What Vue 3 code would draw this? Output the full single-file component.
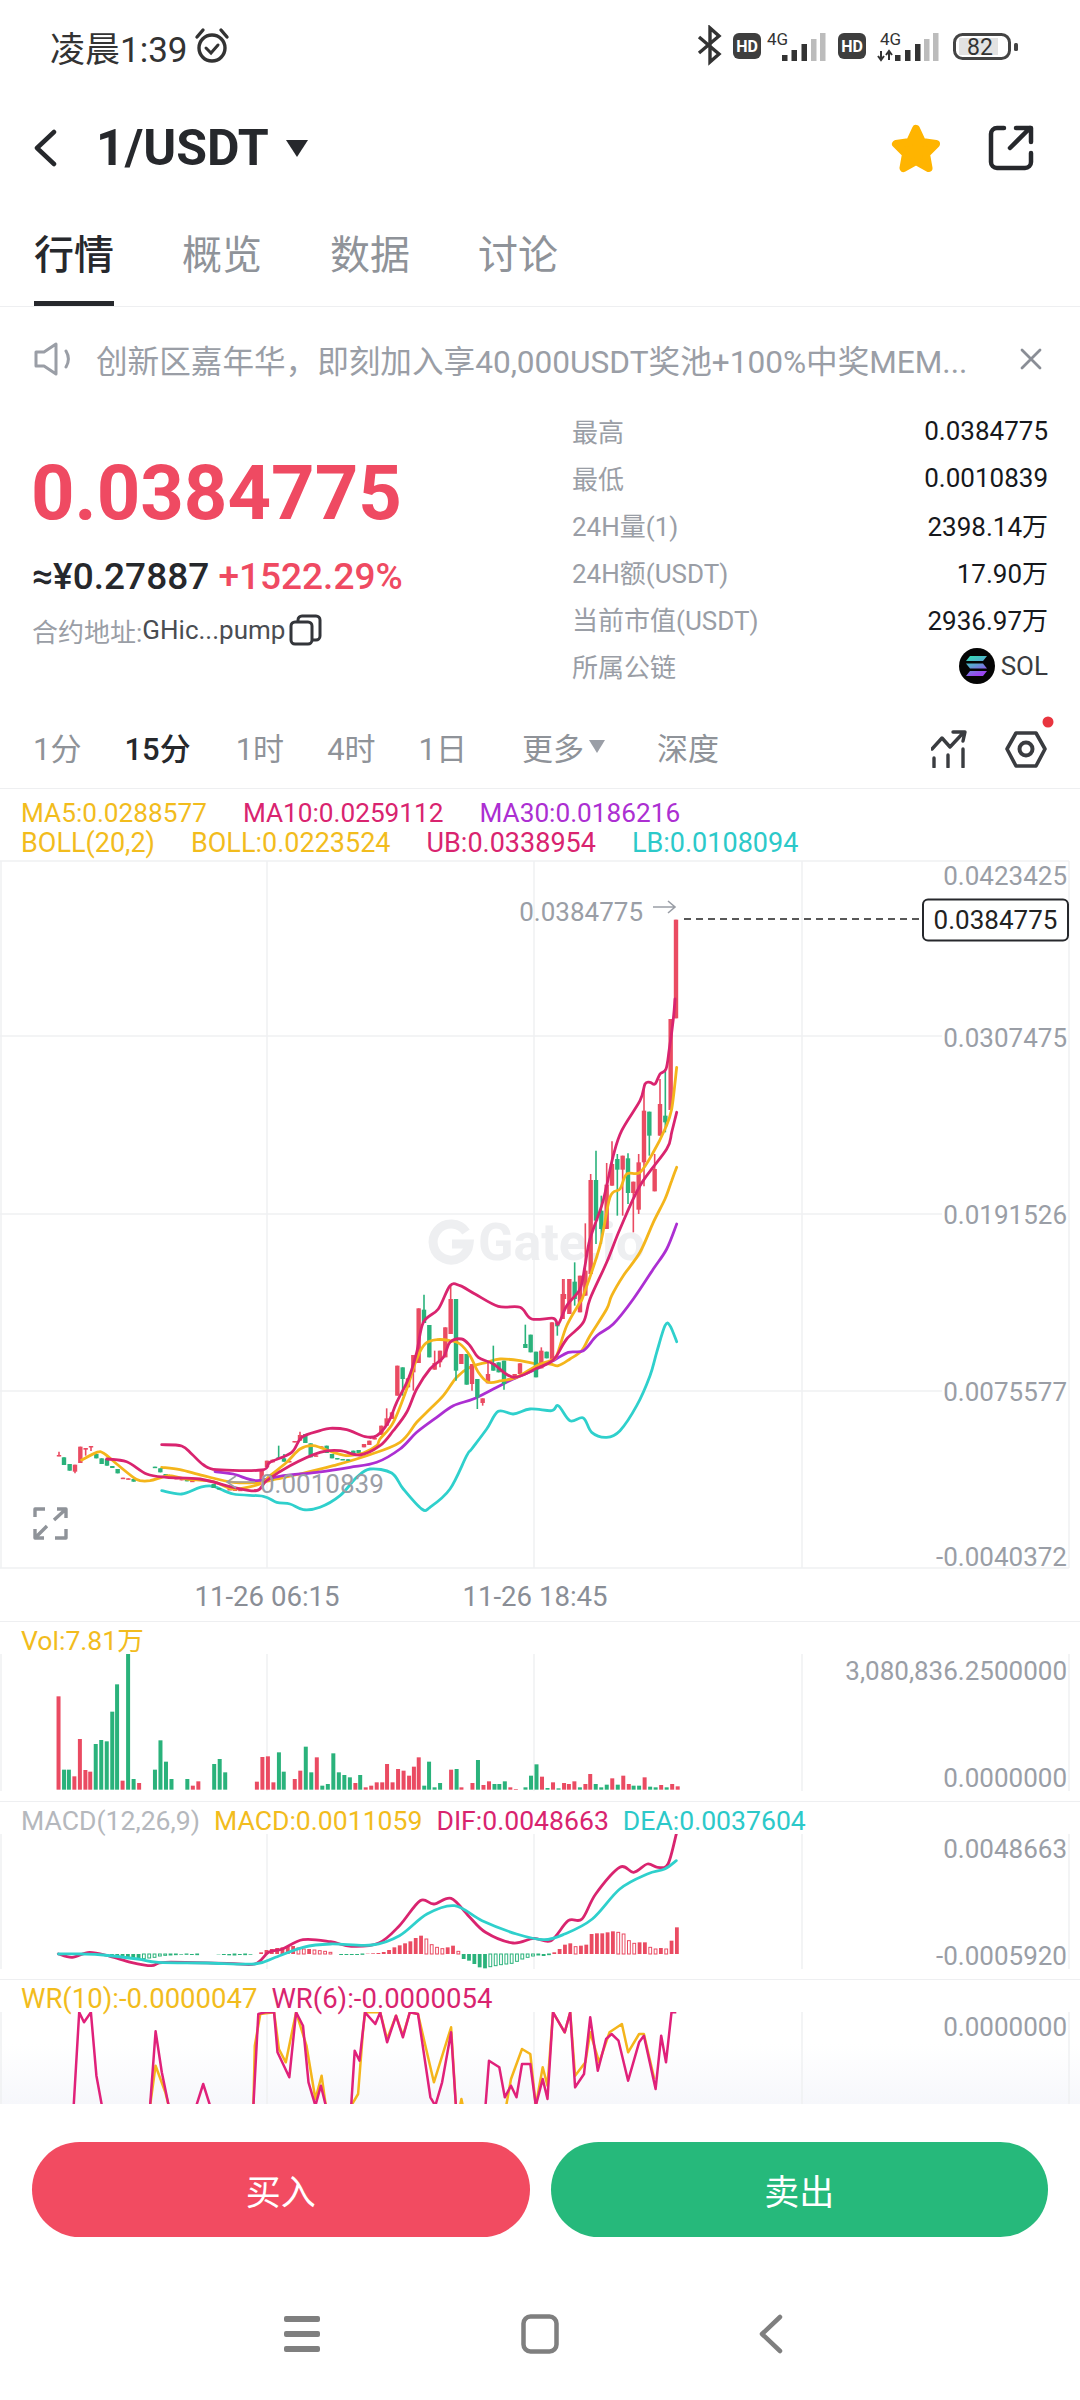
<script setup>
const RED = '#ea4b62';
const GREEN = '#2ab27b';

// Points are read off crops of the chart, so each list keeps its crop's scale.
const z4 = (pts) => pts.map(([x, y]) => [x / 3, 1300 + y / 3]);
const z7 = (pts) => pts.map(([x, y]) => [380 + x / 3, 1250 + y / 3]);
const z9 = (pts) => pts.map(([x, y]) => [540 + x / 3, 1100 + y / 3]);

// Catmull-Rom through the points, the indicators are curves on the real chart.
function smooth(pts) {
  let d = `M${pts[0][0].toFixed(1)} ${pts[0][1].toFixed(1)}`;
  for (let i = 0; i < pts.length - 1; i++) {
    const p0 = pts[i - 1] || pts[i];
    const p1 = pts[i];
    const p2 = pts[i + 1];
    const p3 = pts[i + 2] || p2;
    const c1x = p1[0] + (p2[0] - p0[0]) / 6;
    const c1y = p1[1] + (p2[1] - p0[1]) / 6;
    const c2x = p2[0] - (p3[0] - p1[0]) / 6;
    const c2y = p2[1] - (p3[1] - p1[1]) / 6;
    d += `C${c1x.toFixed(1)} ${c1y.toFixed(1)} ${c2x.toFixed(1)} ${c2y.toFixed(1)} ${p2[0].toFixed(1)} ${p2[1].toFixed(1)}`;
  }
  return d;
}
const toPoints = (pts) => pts.map(([x, y]) => `${x.toFixed(1)},${y.toFixed(1)}`).join(' ');

const mainLines = [
  {
    color: '#f4b51b',
    d: smooth([
      ...z4([[485, 505], [540, 512], [610, 530], [700, 550], [780, 550], [830, 540], [900, 525], [1000, 500], [1100, 470]]),
      ...z7([[60, 580], [110, 520], [150, 480], [190, 440], [230, 385], [270, 355], [320, 340], [360, 330], [420, 335], [470, 345], [510, 345], [535, 350], [570, 330], [605, 305], [630, 260], [680, 180]]),
      ...z9([[215, 590], [250, 530], [300, 460], [340, 370], [375, 300], [395, 245], [410, 205]]),
    ]),
  },
  {
    color: '#ac2fd2',
    d: smooth([
      ...z4([[645, 518], [700, 525], [770, 545], [850, 530], [950, 520], [1050, 505], [1130, 490]]),
      ...z7([[60, 600], [110, 550], [170, 505], [220, 470], [280, 450], [340, 420], [400, 390], [470, 360], [520, 335], [565, 310], [610, 305], [650, 260], [700, 225]]),
      ...z9([[280, 600], [340, 510], [380, 450], [410, 375]]),
    ]),
  },
  {
    color: '#2fd0cc',
    d: smooth([
      ...z4([[485, 575], [545, 585], [600, 565], [640, 562], [700, 585], [790, 592], [830, 610], [870, 615], [910, 632], [960, 625], [1020, 590], [1070, 535], [1110, 510], [1175, 522], [1210, 570], [1265, 630], [1290, 625], [1350, 570], [1400, 470]]),
      ...z7([[275, 600], [320, 540], [355, 487], [400, 495], [450, 480], [515, 485], [535, 470], [570, 515], [610, 507], [635, 550], [680, 565], [720, 545], [770, 470], [810, 380], [830, 310], [855, 230], [870, 230], [890, 278]]),
    ]),
  },
];

const overLines = [
  {
    color: '#f4b51b',
    d: smooth([
      ...z4([[245, 483], [290, 460], [310, 462], [350, 495], [400, 535], [420, 545], [450, 545], [485, 535], [510, 530], [560, 540], [640, 548], [700, 570], [780, 555], [810, 530], [860, 490], [900, 450], [940, 440], [1000, 460], [1045, 470], [1090, 462], [1130, 440]]),
      ...z7([[0, 570], [40, 520], [80, 420], [110, 330], [135, 285], [170, 272], [210, 275], [240, 285], [270, 320], [295, 370], [325, 400], [365, 395], [410, 385], [470, 350], [510, 335], [530, 320], [560, 230], [600, 160]]),
      ...z9([[130, 590], [180, 440], [210, 295], [240, 270], [260, 225], [300, 220], [340, 160], [375, 90], [395, 30], [410, -95]]),
    ]),
  },
  {
    color: '#d9246f',
    d: smooth([
      ...z4([[320, 480], [380, 488], [440, 525], [500, 535], [600, 540], [700, 565], [770, 575], [800, 545], [870, 500], [960, 460], [1020, 455], [1080, 468]]),
      ...z7([[0, 590], [40, 545], [80, 490], [110, 420], [150, 360], [190, 325], [210, 280], [245, 270], [270, 290], [295, 325], [340, 345], [400, 385], [470, 358], [510, 340], [530, 320], [560, 270], [610, 220]]),
      ...z9([[150, 600], [200, 490], [240, 390], [300, 260], [380, 150], [395, 100], [410, 40]]),
    ]),
  },
  {
    color: '#d9246f',
    d: smooth([
      ...z4([[485, 437], [545, 441], [575, 465], [610, 497], [650, 512], [785, 513], [810, 490], [875, 460], [905, 415], [960, 395], [990, 388], [1040, 392], [1095, 413], [1130, 410]]),
      ...z7([[25, 520], [50, 460], [85, 390], [110, 310], [130, 220], [175, 180], [210, 110], [240, 110], [285, 135], [355, 172], [420, 175], [455, 210], [520, 208], [535, 225], [560, 170], [600, 120]]),
      ...z9([[135, 500], [150, 420], [185, 320], [200, 260], [220, 170], [245, 95], [300, 5], [315, -45], [330, -50], [345, -45], [360, -75], [378, -90], [388, -150], [400, -240], [405, -300]]),
    ]),
  },
];

// [colour, x, bodyTop, bodyBottom, wickTop, wickBottom]
const leftCandles = [
  ['r', 177, 468, 472, 458, 472], ['g', 192, 475, 498], ['g', 209, 495, 515], ['r', 225, 497, 518, 497, 523], ['r', 241, 443, 492],
  ['r', 257, 447, 452, 447, 470], ['r', 273, 441, 444, 441, 456], ['g', 289, 465, 478], ['g', 305, 478, 495], ['g', 321, 480, 500],
  ['g', 337, 501, 507], ['g', 353, 510, 523], ['r', 369, 536, 539], ['r', 385, 538, 541], ['g', 401, 540, 548],
  ['g', 465, 503, 506], ['g', 481, 508, 520], ['g', 497, 525, 530], ['g', 513, 530, 538], ['r', 530, 537, 540], ['r', 545, 537, 544],
  ['g', 561, 535, 547], ['r', 577, 545, 549], ['r', 593, 540, 544], ['r', 609, 540, 544], ['g', 641, 555, 567], ['g', 657, 567, 571],
  ['r', 689, 570, 573], ['r', 705, 570, 576], ['r', 721, 572, 575], ['r', 769, 570, 574], ['r', 785, 510, 540], ['r', 801, 485, 505],
  ['r', 818, 482, 490], ['g', 836, 475, 480, 440, 480], ['g', 852, 478, 488, 465, 488], ['r', 868, 486, 490], ['r', 884, 426, 430],
  ['r', 900, 408, 425, 398, 425], ['g', 916, 405, 432], ['g', 932, 433, 475], ['r', 948, 469, 472], ['r', 964, 442, 445],
  ['g', 980, 440, 462], ['g', 996, 465, 478], ['g', 1012, 477, 481], ['g', 1028, 480, 483], ['g', 1044, 481, 484], ['g', 1060, 455, 465],
  ['g', 1076, 453, 462], ['r', 1092, 435, 445], ['r', 1108, 425, 438], ['r', 1124, 417, 421],
];
const midCandles = [
  ['r', 4, 530, 558], ['r', 20, 508, 530, 478, 530], ['r', 36, 490, 510], ['r', 52, 350, 440], ['g', 68, 355, 390, 355, 440],
  ['r', 84, 388, 415], ['r', 100, 318, 370, 318, 425], ['r', 116, 178, 342], ['g', 132, 182, 222, 137, 222], ['g', 148, 228, 325],
  ['r', 164, 342, 362, 305, 362], ['r', 180, 305, 340, 305, 355], ['r', 196, 235, 325], ['r', 212, 150, 255, 110, 255],
  ['g', 228, 150, 365, 150, 395], ['r', 244, 315, 345], ['g', 260, 315, 407], ['r', 276, 345, 405, 345, 425],
  ['g', 292, 390, 445, 390, 480], ['r', 308, 448, 462, 448, 470], ['r', 324, 375, 403, 335, 403], ['g', 340, 342, 365, 290, 365],
  ['g', 356, 340, 370], ['g', 372, 335, 405, 335, 422], ['r', 388, 388, 395], ['r', 404, 375, 383], ['r', 420, 343, 375],
  ['g', 436, 285, 297, 227, 297], ['g', 452, 257, 310], ['g', 468, 308, 385], ['r', 484, 305, 358, 295, 358], ['g', 500, 308, 328],
  ['r', 516, 220, 330], ['g', 532, 222, 232, 222, 260], ['r', 548, 135, 210, 90, 210],
];
const rightCandles = [
  ['r', 72, 585, 600, 540, 600], ['r', 88, 540, 645], ['g', 104, 548, 600, 490, 620], ['r', 120, 530, 640], ['r', 136, 515, 590, 373, 590],
  ['r', 152, 243, 525, 225, 525], ['g', 168, 243, 365, 155, 435], ['g', 184, 335, 390, 290, 435], ['r', 200, 257, 390, 192, 390],
  ['r', 216, 195, 260, 127, 260], ['g', 232, 180, 212, 165, 350], ['r', 248, 170, 212, 170, 350], ['g', 264, 178, 282, 163, 315],
  ['r', 280, 248, 282, 248, 400], ['r', 296, 190, 332, 165, 345], ['r', 312, 35, 190, -40, 262], ['g', 328, 38, 110, 38, 170],
  ['r', 344, 210, 277, 165, 277], ['r', 360, 15, 110, -60, 110], ['g', 376, 50, 70, -90, 100], ['r', 392, -240, 33], ['r', 408, -538, -242],
];
const candle = (ox, oy) => ([c, x, t, b, wt, wb]) => ({
  x: ox + x / 3,
  top: oy + t / 3,
  height: Math.max((b - t) / 3, 1.5),
  wickTop: oy + (wt ?? t) / 3,
  wickBottom: oy + (wb ?? b) / 3,
  color: c === 'r' ? RED : GREEN,
});
const candles = [
  ...leftCandles.map(candle(0, 1300)),
  ...midCandles.map(candle(380, 1250)),
  ...rightCandles.map(candle(540, 1100)),
];

// Volume bars: colour, then x and top as read on the stretched crop
const VOL_BASE = 512;
const volRaw = 'r85:232 g93:452 g100:452 r108:472 r116:360 r124:453 r131:458 g139:375 g147:363 g155:367 g163:278 g170:196 r178:485 g186:105 g194:480 r202:492 g225:452 g233:364 g241:428 g249:480 g272:480 r280:500 r288:487 g311:435 g319:420 g327:460 r373:488 r381:414 r389:412 r397:490 g405:400 g412:458 r428:480 r436:455 g444:383 g452:460 r460:415 g468:500 g476:495 g484:403 g492:460 g500:468 g508:475 r516:492 g523:468 r531:505 r539:500 r547:490 r555:490 r562:435 r570:490 r578:450 r586:455 r594:470 r601:443 r608:415 g616:500 g623:428 g631:505 g639:492 r655:452 g663:450 r670:505 r686:492 g694:423 r702:498 r710:487 g718:495 g725:495 g733:487 r741:505 r749:510 g763:505 g771:470 g779:436 r787:473 g795:507 r803:490 g811:508 r819:492 r826:495 r834:487 g842:505 r850:495 r857:465 g865:495 g873:505 g881:497 r889:478 g897:497 r905:470 r913:495 g920:500 g928:500 r936:475 g944:503 g952:505 r960:498 g968:505 r976:495 r984:502';
const volBars = volRaw.split(' ').map((item) => {
  const [x, top] = item.slice(1).split(':').map(Number);
  return {
    x: x / 1.452 - 2,
    y: 1620 + top / 3,
    height: (VOL_BASE - top) / 3,
    color: item[0] === 'r' ? RED : GREEN,
  };
});

const macdValues = [
  1, 1, 1, 1, 1, 0, 0, 0, 0, -2, -5, -8, -10, -12, -14, -15, -14, -12, -10, -6,
  -4, -3, -2, -2, -1, -3, -2, 0, 0, 0, -1, -3, -4, -3, -3, -2, -2, 0, 5,
  12, 15, 18, 20, 22, 24, 18, 15, 15, 12, 10, 8, 5, 0, -3, -3, -3, -3, -1,
  1, 2, 3, 6, 12, 20, 26, 32, 38, 48, 55, 45, 28, 20, 16, 20, 25, 8,
  -15, -20, -30, -40, -43, -38, -35, -32, -30, -28, -22, -15, -10, -6, -3, -6, -2,
  5, 15, 28, 32, 22, 25, 28, 60, 62, 62, 65, 68, 65, 60, 40, 32, 35, 35, 20, 15, 18, 15, 40, 80,
];
const MACD_BASE = 1955;
const macdBars = macdValues.map((v, i) => {
  const prev = i ? macdValues[i - 1] : 0;
  const h = Math.abs(v) / 3;
  return {
    x: 58.5 + i * 5.33 - 1.8,
    y: v > 0 ? MACD_BASE - h : MACD_BASE,
    height: h,
    color: v > 0 ? RED : GREEN,
    hollow: Math.abs(v) < Math.abs(prev) && Math.sign(v) === Math.sign(prev),
  };
}).filter((b) => b.height > 0);

const z5 = (pts) => pts.map(([x, y]) => [x / 1.452, 1620 + y / 3]);
const z6 = (pts) => toPoints(pts.map(([x, y]) => [x / 1.452, 2000 + y / 3]));

const macdDif = smooth(z5([[85, 1005], [105, 1015], [130, 1000], [160, 1012], [190, 1030], [220, 1040], [240, 1030], [330, 1033], [370, 1035], [390, 1000], [410, 990], [440, 962], [480, 968], [510, 982], [550, 972], [580, 920], [610, 845], [630, 855], [655, 838], [680, 890], [705, 940], [745, 972], [775, 958], [800, 965], [825, 905], [845, 900], [865, 825], [900, 745], [920, 760], [940, 735], [955, 745], [970, 735], [982, 645]]));
const macdDea = smooth(z5([[85, 1005], [120, 1005], [150, 1008], [200, 1020], [230, 1030], [300, 1032], [370, 1035], [400, 1015], [440, 985], [480, 975], [540, 978], [580, 950], [620, 885], [660, 860], [700, 905], [750, 945], [790, 962], [820, 945], [860, 900], [900, 810], [940, 765], [965, 750], [982, 725]]));

const wr10 = [
  [[218, 320], [226, 200], [240, 280], [245, 320]],
  [[368, 320], [370, 140], [378, 45], [398, 40], [405, 150], [415, 190], [430, 40], [445, 140], [458, 300], [467, 230], [473, 320]],
  [[510, 320], [520, 285], [527, 100], [530, 40], [552, 40], [562, 120], [575, 50], [585, 110], [595, 40], [607, 45], [630, 250], [655, 85], [662, 320]],
  [[668, 320], [670, 300], [672, 320]],
  [[735, 320], [742, 240], [758, 150], [770, 165], [778, 320], [788, 205], [795, 260], [803, 40], [820, 100], [828, 40], [835, 230], [850, 190], [857, 100], [870, 190], [885, 100], [903, 75], [912, 160], [928, 105], [935, 105], [950, 240]],
].map(z6);
const wr6 = [
  [[107, 320], [115, 40], [122, 70], [132, 40], [140, 230], [148, 320]],
  [[218, 320], [226, 97], [235, 220], [245, 320]],
  [[285, 320], [295, 255], [305, 320]],
  [[368, 320], [375, 45], [385, 40], [398, 40], [403, 160], [420, 235], [430, 40], [440, 80], [448, 250], [458, 320], [466, 260], [473, 320]],
  [[510, 320], [515, 155], [522, 185], [530, 40], [545, 75], [552, 40], [562, 130], [575, 50], [585, 115], [595, 40], [607, 45], [625, 295], [632, 320], [642, 250], [655, 100], [662, 320]],
  [[705, 320], [710, 185], [725, 205], [733, 295], [742, 260], [750, 295], [758, 195], [770, 195], [778, 320], [788, 240], [795, 300], [803, 40], [820, 100], [828, 40], [835, 265], [848, 225], [857, 55], [868, 215], [880, 120], [888, 105], [898, 125], [912, 245], [928, 130], [935, 110], [952, 270], [960, 110], [967, 190], [975, 40], [982, 40]],
].map(z6);

const tabs = ['行情', '概览', '数据', '讨论'];
const stats = [
  { label: '最高', value: '0.0384775' },
  { label: '最低', value: '0.0010839' },
  { label: '24H量(1)', value: '2398.14万' },
  { label: '24H额(USDT)', value: '17.90万' },
  { label: '当前市值(USDT)', value: '2936.97万' },
];
const ranges = [
  { text: '1分' },
  { text: '15分', active: true },
  { text: '1时' },
  { text: '4时' },
  { text: '1日' },
];
const hGrid = [1037, 1215, 1392];
const vGrid = [1, 267, 534, 802, 1069];
const priceAxis = [
  ['0.0423425', 875],
  ['0.0307475', 1037],
  ['0.0191526', 1214],
  ['0.0075577', 1391],
  ['-0.0040372', 1556],
];
</script>

<template>
  <div class="screen">
    <div class="status">
      <div class="status-left">
        <span class="clock">凌晨1:39</span>
        <svg width="38" height="38" viewBox="0 0 38 38" fill="none" stroke="#333" stroke-width="3.4" stroke-linecap="round">
          <circle cx="19" cy="21" r="13" />
          <path d="M13 21l5 5 7-8" stroke-width="3" />
          <path d="M4 10l6-7M34 10l-6-7" />
        </svg>
      </div>
      <svg class="status-right" width="335" height="42" viewBox="690 25 335 42">
        <path d="M699 37l20 17-9 8V28l9 8-20 17" fill="none" stroke="#333" stroke-width="3.4" />
        <rect x="733" y="33" width="28" height="26" rx="6" fill="#3e3e3e" />
        <text x="747" y="51.5" class="hd">HD</text>
        <text x="767" y="45" class="net">4G</text>
        <rect x="782" y="55" width="5.5" height="6" fill="#333" />
        <rect x="791.5" y="50" width="5.5" height="11" fill="#333" />
        <rect x="801.5" y="44" width="5.5" height="17" fill="#333" />
        <rect x="811" y="39" width="5.5" height="22" fill="#bcbcbc" />
        <rect x="820" y="33" width="5.5" height="28" fill="#bcbcbc" />
        <rect x="838" y="33" width="28" height="26" rx="6" fill="#3e3e3e" />
        <text x="852" y="51.5" class="hd">HD</text>
        <text x="880" y="45" class="net">4G</text>
        <path d="M881 51v9M878 56l3 4 3-4M889 60v-9M886 55l3-4 3 4" fill="none" stroke="#333" stroke-width="2" />
        <rect x="895" y="55" width="5.5" height="6" fill="#333" />
        <rect x="905" y="50" width="5.5" height="11" fill="#333" />
        <rect x="915" y="44" width="5.5" height="17" fill="#333" />
        <rect x="924" y="39" width="5.5" height="22" fill="#bcbcbc" />
        <rect x="933" y="33" width="5.5" height="28" fill="#bcbcbc" />
        <rect x="954.5" y="34.5" width="55" height="24" rx="8" fill="none" stroke="#444" stroke-width="3" />
        <rect x="959" y="38" width="39" height="17" fill="#e2e2e2" />
        <rect x="1014" y="43" width="4" height="8" rx="1.5" fill="#444" />
        <text x="980" y="54.5" class="batt">82</text>
      </svg>
    </div>

    <div class="header">
      <svg width="24" height="38" viewBox="0 0 24 38" fill="none" stroke="#26282c" stroke-width="4.5" stroke-linecap="round" stroke-linejoin="round">
        <path d="M21 3L4 19l17 16" />
      </svg>
      <span class="pair">1/USDT</span>
      <span class="caret"></span>
      <svg class="star" width="52" height="50" viewBox="0 0 52 50">
        <path d="M26 6l6 13 14 2-10 10 2.5 14L26 38l-12.5 7L16 31 6 21l14-2z" fill="#ffb400" stroke="#ffb400" stroke-width="8" stroke-linejoin="round" />
      </svg>
      <svg class="share" width="46" height="46" viewBox="0 0 46 46" fill="none" stroke="#26282c" stroke-width="4.5" stroke-linecap="round" stroke-linejoin="round">
        <path d="M16 3H9a6 6 0 0 0-6 6v28a6 6 0 0 0 6 6h28a6 6 0 0 0 6-6v-9" />
        <path d="M22 23L42 3M28 3h15v14" />
      </svg>
    </div>

    <div class="tabs">
      <div v-for="(t, i) in tabs" :key="t" class="tab" :class="{ on: i === 0 }">{{ t }}</div>
    </div>

    <div class="notice">
      <svg width="38" height="34" viewBox="0 0 38 34" fill="none" stroke="#9a9ea6" stroke-width="3" stroke-linejoin="round" stroke-linecap="round">
        <path d="M2 10h8l12-8v30l-12-8H2z" />
        <path d="M32 9c3 5 3 11 0 16" />
      </svg>
      <span class="notice-text">创新区嘉年华，即刻加入享40,000USDT奖池+100%中奖MEM...</span>
      <svg width="22" height="22" viewBox="0 0 22 22" stroke="#8a8e96" stroke-width="2.8" stroke-linecap="round">
        <path d="M2 2l18 18M20 2L2 20" />
      </svg>
    </div>

    <div class="stats">
      <div class="stats-left">
        <div class="price">0.0384775</div>
        <div class="fiat">≈¥0.27887 <span class="up">+1522.29%</span></div>
        <div class="contract">
          <span class="contract-label">合约地址:</span><span class="contract-val">GHic...pump</span>
          <svg width="33" height="32" viewBox="0 0 33 32" fill="none" stroke="#33353a" stroke-width="3" stroke-linejoin="round">
            <rect x="2" y="8" width="21" height="22" rx="4" />
            <path d="M9 8V6a4 4 0 0 1 4-4h14a4 4 0 0 1 4 4v16a4 4 0 0 1-4 4h-4" />
          </svg>
        </div>
      </div>
      <div class="stats-right">
        <div v-for="s in stats" :key="s.label" class="stat">
          <span class="stat-label">{{ s.label }}</span>
          <span class="stat-value">{{ s.value }}</span>
        </div>
        <div class="stat">
          <span class="stat-label">所属公链</span>
          <span class="stat-value chain">
            <svg width="36" height="36" viewBox="0 0 36 36">
              <defs>
                <linearGradient id="sol" x1="0" y1="0" x2="0.4" y2="1">
                  <stop offset="0" stop-color="#2fe3b0" />
                  <stop offset="0.5" stop-color="#5aa6d0" />
                  <stop offset="1" stop-color="#9b45f0" />
                </linearGradient>
              </defs>
              <circle cx="18" cy="18" r="18" fill="#050505" />
              <path d="M11 8h17l-4 5H7zM7 15.5h17l4 5H11zM11 23h17l-4 5H7z" fill="url(#sol)" />
            </svg>
            SOL
          </span>
        </div>
      </div>
    </div>

    <div class="ranges">
      <span v-for="r in ranges" :key="r.text" class="range" :class="{ on: r.active }">{{ r.text }}</span>
      <span class="range more">更多<i class="more-caret"></i></span>
      <span class="range depth">深度</span>
      <svg class="tool-a" width="36" height="38" viewBox="0 0 36 38" fill="none" stroke="#3a3c40" stroke-width="3.4" stroke-linecap="round" stroke-linejoin="round">
        <path d="M1 19l10-11 8 9L33 2M22 2h12l-2 9" />
        <path d="M3 28v9M17 25v12M32 19v18" />
      </svg>
      <svg class="tool-b" width="52" height="52" viewBox="0 0 52 52" fill="none" stroke="#3a3c40" stroke-width="3.6" stroke-linejoin="round">
        <path d="M11 17h20l9 16-9 17H11L2 33z" />
        <circle cx="21" cy="33" r="6.5" stroke-width="4" />
        <circle cx="43" cy="6" r="5.5" fill="#e8353f" stroke="none" />
      </svg>
    </div>

    <div class="legend">
      <div class="legend-row">
        <span class="yellow">MA5:0.0288577</span>
        <span class="pink">MA10:0.0259112</span>
        <span class="purple">MA30:0.0186216</span>
      </div>
      <div class="legend-row wide">
        <span class="yellow">BOLL(20,2)</span>
        <span class="yellow">BOLL:0.0223524</span>
        <span class="pink">UB:0.0338954</span>
        <span class="teal">LB:0.0108094</span>
      </div>
    </div>

    <svg class="chart" width="1080" height="762" viewBox="0 860 1080 762">
      <line x1="0" x2="1069" y1="862" y2="862" class="grid" />
      <line x1="0" x2="1069" y1="1569" y2="1569" class="grid" />
      <line v-for="y in hGrid" :key="y" x1="0" x2="942" :y1="y" :y2="y" class="grid" />
      <line v-for="x in vGrid" :key="x" :x1="x" :x2="x" y1="862" y2="1569" class="grid" />

      <g class="mark">
        <path d="M466 1233a18 18 0 1 0 3 12h-17" fill="none" stroke="#eeeff1" stroke-width="9" />
        <text x="478" y="1261">Gate.io</text>
      </g>

      <path v-for="(l, i) in mainLines" :key="'m' + i" :d="l.d" :stroke="l.color" class="line" />
      <g v-for="(c, i) in candles" :key="i">
        <line :x1="c.x" :x2="c.x" :y1="c.wickTop" :y2="c.wickBottom" :stroke="c.color" stroke-width="1.6" />
        <rect :x="c.x - 2.2" :y="c.top" width="4.4" :height="c.height" :fill="c.color" />
      </g>
      <path v-for="(l, i) in overLines" :key="'o' + i" :d="l.d" :stroke="l.color" class="line" />

      <text v-for="p in priceAxis" :key="p[0]" x="1067" :y="p[1]" class="axis">{{ p[0] }}</text>

      <text x="643" y="911" class="axis">0.0384775</text>
      <path d="M653 908h22M668 902l7 6-7 6" fill="none" stroke="#9a9ea6" stroke-width="1.6" />
      <line x1="684" x2="921" y1="920" y2="920" stroke="#222" stroke-width="1.6" stroke-dasharray="7 5" />
      <rect x="923" y="900.5" width="145" height="41" rx="5" fill="#fff" stroke="#26282c" stroke-width="2" />
      <text x="995.5" y="919" class="tag">0.0384775</text>

      <path d="M255 1483h-28M236 1477l-9 6 9 6" fill="none" stroke="#9a9ea6" stroke-width="1.6" />
      <text x="260" y="1483" class="axis-start">0.0010839</text>

      <g fill="none" stroke="#8f9399" stroke-width="3.4" stroke-linejoin="round">
        <path d="M35 1518v-8h10M57 1510h9v9M66 1510l-12 11M35 1530v9h9M35 1539l12-12M55 1539h11v-9" />
      </g>

      <text x="267" y="1595" class="time">11-26 06:15</text>
      <text x="535" y="1595" class="time">11-26 18:45</text>
    </svg>

    <div class="pane">
      <div class="pane-legend"><span class="yellow">Vol:7.81万</span></div>
      <svg width="1080" height="147" viewBox="0 1655 1080 147">
        <line v-for="x in vGrid" :key="x" :x1="x" :x2="x" y1="1655" y2="1792" class="grid" />
        <rect v-for="(b, i) in volBars" :key="i" :x="b.x" :y="b.y" width="4" :height="b.height" :fill="b.color" />
        <text x="1067" y="1670" class="axis">3,080,836.2500000</text>
        <text x="1067" y="1777" class="axis">0.0000000</text>
      </svg>
    </div>

    <div class="pane">
      <div class="pane-legend">
        <span class="muted">MACD(12,26,9)</span>
        <span class="yellow">MACD:0.0011059</span>
        <span class="pink">DIF:0.0048663</span>
        <span class="teal">DEA:0.0037604</span>
      </div>
      <svg width="1080" height="145" viewBox="0 1835 1080 145">
        <line v-for="x in vGrid" :key="x" :x1="x" :x2="x" y1="1835" y2="1970" class="grid" />
        <template v-for="(b, i) in macdBars" :key="i">
          <rect v-if="b.hollow" :x="b.x + 0.5" :y="b.y" width="2.8" :height="b.height" fill="#fff" :stroke="b.color" stroke-width="1" />
          <rect v-else :x="b.x" :y="b.y" width="3.8" :height="b.height" :fill="b.color" />
        </template>
        <path :d="macdDif" stroke="#d9246f" class="line" />
        <path :d="macdDea" stroke="#2fd0cc" class="line" />
        <text x="1067" y="1848" class="axis">0.0048663</text>
        <text x="1067" y="1955" class="axis">-0.0005920</text>
      </svg>
    </div>

    <div class="pane wr">
      <div class="pane-legend">
        <span class="yellow">WR(10):-0.0000047</span>
        <span class="pink">WR(6):-0.0000054</span>
      </div>
      <svg width="1080" height="92" viewBox="0 2013 1080 92">
        <defs>
          <linearGradient id="fade" x1="0" y1="0" x2="0" y2="1">
            <stop offset="0" stop-color="#f7f8fb" stop-opacity="0" />
            <stop offset="1" stop-color="#f6f7fb" />
          </linearGradient>
        </defs>
        <rect x="0" y="2045" width="1080" height="60" fill="url(#fade)" />
        <line v-for="x in vGrid" :key="x" :x1="x" :x2="x" y1="2013" y2="2105" class="grid" />
        <polyline v-for="(p, i) in wr10" :key="'a' + i" :points="p" stroke="#f4b51b" class="thin" />
        <polyline v-for="(p, i) in wr6" :key="'b' + i" :points="p" stroke="#e0217a" class="thin" />
        <text x="1067" y="2026" class="axis">0.0000000</text>
      </svg>
    </div>

    <div class="actions">
      <div class="btn buy">买入</div>
      <div class="btn sell">卖出</div>
    </div>

    <div class="nav">
      <svg width="38" height="36" viewBox="0 0 38 36" fill="#7f7f7f">
        <rect x="1" y="0" width="36" height="6" rx="2" />
        <rect x="1" y="15" width="36" height="6" rx="2" />
        <rect x="1" y="30" width="36" height="6" rx="2" />
      </svg>
      <svg width="38" height="40" viewBox="0 0 38 40" fill="none" stroke="#7f7f7f" stroke-width="4.5">
        <rect x="2.5" y="2.5" width="33" height="35" rx="7" />
      </svg>
      <svg width="24" height="40" viewBox="0 0 24 40" fill="none" stroke="#7f7f7f" stroke-width="4.5" stroke-linecap="round" stroke-linejoin="round">
        <path d="M21 3L3 20l18 17" />
      </svg>
    </div>
  </div>
</template>

<style scoped>
.screen {
  width: 1080px;
  height: 2400px;
  display: flex;
  flex-direction: column;
  overflow: hidden;
  background: #fff;
  color: #26282c;
  font-family: Roboto, "Noto Sans CJK SC", sans-serif;
}

.status {
  height: 92px;
  display: flex;
  align-items: center;
  justify-content: space-between;
  padding: 0 55px 0 50px;
  box-sizing: border-box;
}
.status-left {
  display: flex;
  align-items: center;
  gap: 5px;
}
.clock {
  font-size: 35px;
  color: #333;
}
.hd {
  font-size: 16px;
  font-weight: 700;
  fill: #fff;
  text-anchor: middle;
}
.net {
  font-size: 17px;
  fill: #333;
}
.batt {
  font-size: 23px;
  fill: #333;
  text-anchor: middle;
}

.header {
  height: 112px;
  display: flex;
  align-items: center;
  padding: 0 46px 0 33px;
  box-sizing: border-box;
}
.pair {
  margin-left: 39px;
  font-size: 50px;
  font-weight: 700;
}
.caret {
  width: 0;
  height: 0;
  margin-left: 17px;
  border-left: 11px solid transparent;
  border-right: 11px solid transparent;
  border-top: 17px solid #26282c;
}
.star {
  margin-left: auto;
}
.share {
  margin-left: 46px;
}

.tabs {
  height: 103px;
  display: flex;
  gap: 68px;
  padding-left: 34px;
  border-bottom: 1px solid #eeeff1;
  box-sizing: border-box;
}
.tab {
  height: 102px;
  box-sizing: border-box;
  padding-bottom: 2px;
  border-bottom: 5px solid transparent;
  display: flex;
  align-items: center;
  font-size: 40px;
  color: #8f9399;
}
.tab.on {
  color: #26282c;
  font-weight: 500;
  border-bottom-color: #26282c;
}

.notice {
  height: 101px;
  box-sizing: border-box;
  padding: 3px 38px 0 34px;
  display: flex;
  align-items: center;
}
.notice-text {
  margin-left: 24px;
  flex: 1;
  font-size: 31.6px;
  color: #9a9ea6;
  white-space: nowrap;
}

.stats {
  height: 282px;
  display: flex;
  padding: 0 32px;
}
.stats-left {
  width: 540px;
}
.price {
  margin-top: 40px;
  margin-left: -1px;
  height: 90px;
  line-height: 90px;
  font-size: 76px;
  font-weight: 700;
  color: #ef4a62;
}
.fiat {
  height: 78px;
  line-height: 78px;
  font-size: 37px;
  font-weight: 500;
  white-space: nowrap;
}
.up {
  color: #ef4a62;
}
.contract {
  height: 28px;
  display: flex;
  align-items: center;
  font-size: 26px;
  white-space: nowrap;
}
.contract-label {
  color: #9a9ea6;
}
.contract-val {
  color: #4a4d52;
}
.contract svg {
  margin-left: 4px;
  flex: none;
}
.stats-right {
  flex: 1;
  margin-top: -1px;
}
.stat {
  height: 47px;
  display: flex;
  align-items: center;
  justify-content: space-between;
}
.stat-label {
  font-size: 26px;
  color: #9a9ea6;
}
.stat-value {
  font-size: 26px;
  color: #16181c;
}
.chain {
  display: flex;
  align-items: center;
  gap: 6px;
  color: #3a3c40;
}

.ranges {
  height: 99px;
  box-sizing: border-box;
  padding: 14px 33px 0;
  display: flex;
  align-items: center;
  gap: 43px;
  border-bottom: 1px solid #eeeff1;
}
.range {
  font-size: 31px;
  color: #8f9399;
  white-space: nowrap;
}
.range.on {
  color: #26282c;
  font-weight: 500;
  margin-right: 2px;
}
.more {
  display: flex;
  align-items: center;
  margin-left: 12px;
}
.more-caret {
  margin-left: 5px;
  width: 0;
  height: 0;
  border-left: 8px solid transparent;
  border-right: 8px solid transparent;
  border-top: 13px solid #9a9ea6;
}
.depth {
  margin-left: 9px;
}
.tool-a {
  margin-left: auto;
  margin-top: 5px;
}
.tool-b {
  margin-left: -5px;
  margin-right: -10px;
  margin-top: -8px;
}

.legend {
  height: 70px;
  box-sizing: border-box;
  padding: 9px 21px 0;
  font-size: 26.2px;
}
.legend-row {
  height: 30px;
  line-height: 30px;
  display: flex;
  gap: 36px;
  white-space: nowrap;
}
.legend-row.wide {
  font-size: 27px;
}
.yellow {
  color: #f2bc1d;
}
.pink {
  color: #d9246f;
}
.purple {
  color: #ac2fd2;
}
.teal {
  color: #2cc9c9;
}
.muted {
  color: #b5b8bd;
}

.chart,
.pane svg {
  display: block;
  flex: none;
}
.grid {
  stroke: #eff0f2;
  stroke-width: 1.5;
}
.line {
  fill: none;
  stroke-width: 2.8;
  stroke-linejoin: round;
  stroke-linecap: round;
}
.thin {
  fill: none;
  stroke-width: 2.5;
  stroke-linejoin: round;
}
.axis,
.axis-start,
.time,
.tag {
  font-size: 26px;
  dominant-baseline: central;
  transform: translateY(2px);
}
.axis {
  fill: #9a9ea6;
  text-anchor: end;
}
.axis-start {
  fill: #9a9ea6;
}
.time {
  font-size: 27.6px;
  fill: #8a8e96;
  text-anchor: middle;
}
.tag {
  fill: #222;
  text-anchor: middle;
}
.mark text {
  font-size: 52px;
  font-weight: 700;
  fill: #eeeff1;
}

.pane {
  border-top: 1px solid #eeeff1;
}
.pane-legend {
  height: 32px;
  box-sizing: border-box;
  padding: 6px 21px 0;
  font-size: 26.6px;
  line-height: 26px;
  display: flex;
  gap: 14px;
  white-space: nowrap;
}
.wr .pane-legend {
  font-size: 27.5px;
}

.actions {
  display: flex;
  gap: 21px;
  padding: 38px 32px 0;
}
.btn {
  flex: 1;
  height: 95px;
  border-radius: 48px;
  display: flex;
  align-items: center;
  justify-content: center;
  color: #fff;
  font-size: 35px;
}
.buy {
  background: #f24b61;
}
.sell {
  background: #26b97b;
}

.nav {
  height: 162px;
  padding: 32px 297px 0 283px;
  box-sizing: border-box;
  display: flex;
  align-items: center;
  justify-content: space-between;
}
</style>

<style>
body {
  background: #fff;
}
</style>
